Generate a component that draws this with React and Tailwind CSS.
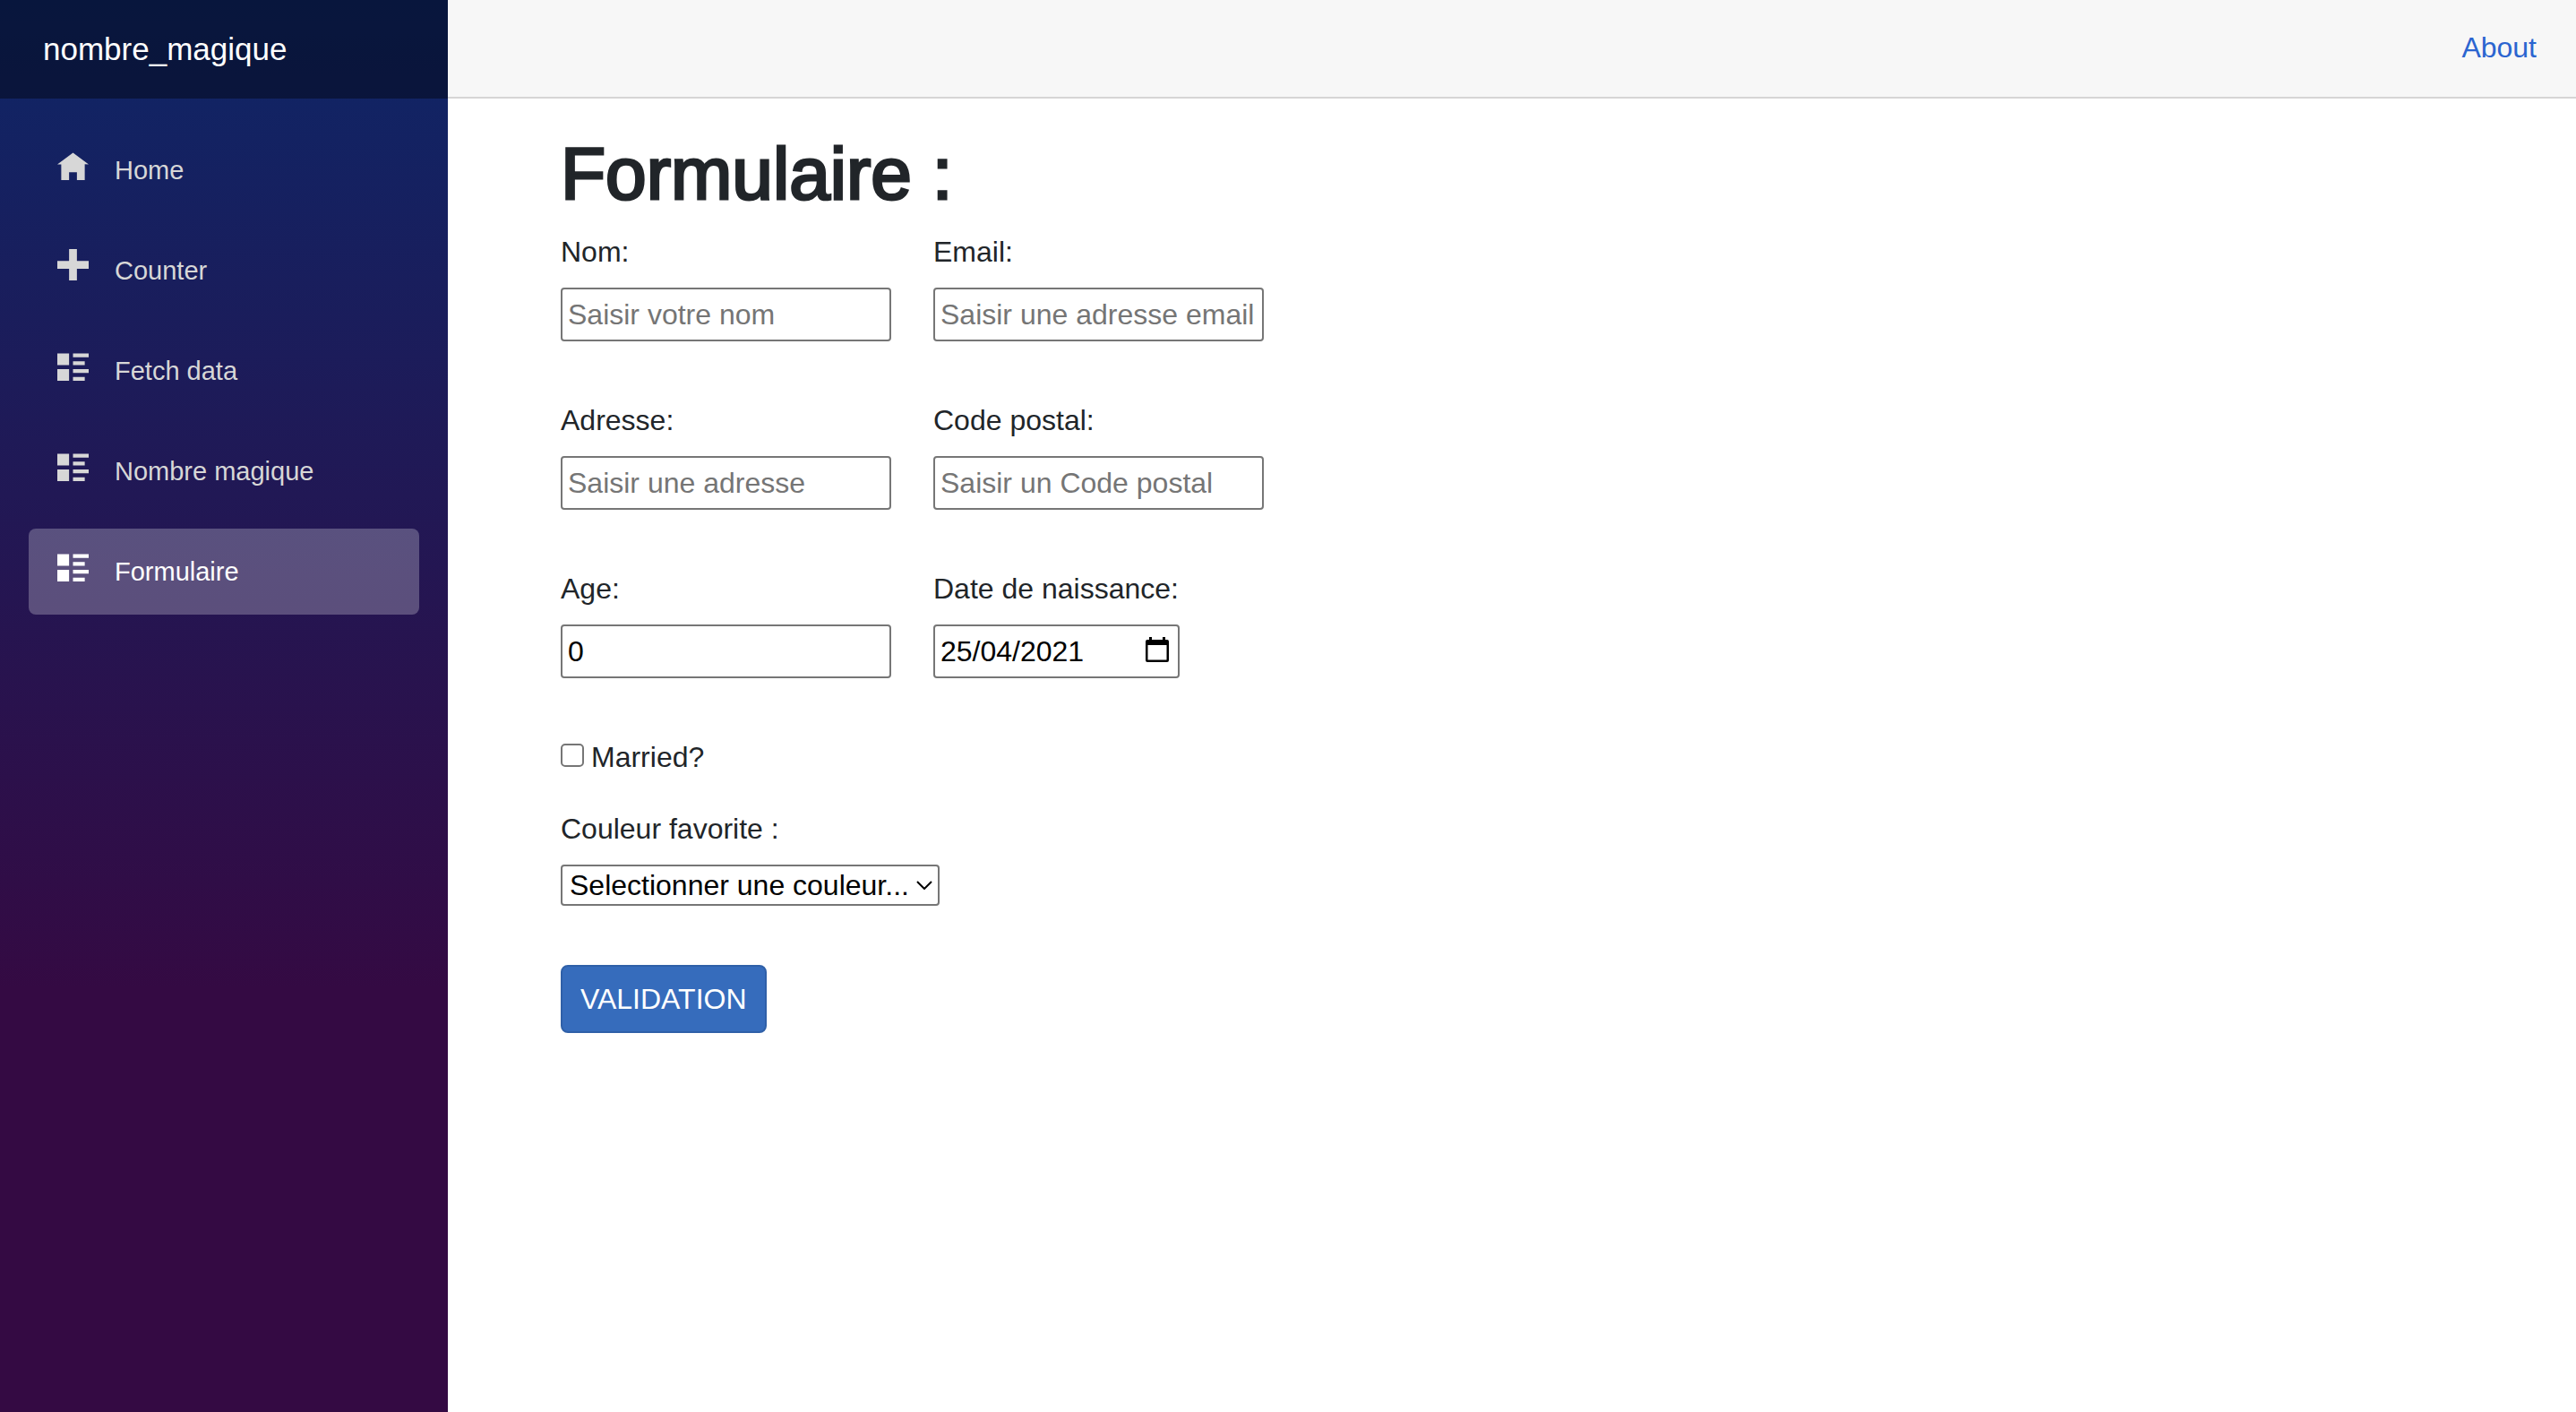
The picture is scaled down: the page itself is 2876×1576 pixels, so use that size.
import React from "react";

const icons = {
  home: { viewBox: "0 -1 8 8", d: "M4 0l-4 3h1v4h2v-2h2v2h2v-4.03l1 .03-4-3z" },
  plus: { viewBox: "0 0 8 8", d: "M3 0v3h-3v2h3v3h2v-3h3v-2h-3v-3h-2z" },
  list: {
    viewBox: "0 -1 8 8",
    d: "M0 0v3h3v-3h-3zm4 0v1h4v-1h-4zm0 2v1h3v-1h-3zm-4 2v3h3v-3h-3zm4 0v1h4v-1h-4zm0 2v1h3v-1h-3z",
  },
};

const links = [
  { label: "Home", icon: "home" },
  { label: "Counter", icon: "plus" },
  { label: "Fetch data", icon: "list" },
  { label: "Nombre magique", icon: "list" },
  { label: "Formulaire", icon: "list", active: true },
];

const control =
  "h-[60px] rounded-sm border-2 border-[#767676] bg-white px-1.5 text-[32px] text-black placeholder:text-[#757575]";

function NavItem({ label, icon, active }) {
  const { viewBox, d } = icons[icon];
  return (
    <li>
      <a
        href="#"
        aria-current={active ? "page" : undefined}
        className={
          "flex h-24 items-center rounded-lg px-8 text-[29px] " +
          (active ? "bg-white/25 text-white" : "text-[#d7d7d7]")
        }
      >
        <span className="h-12 w-16 shrink-0">
          <svg viewBox={viewBox} className="size-[35px] fill-current" aria-hidden="true">
            <path d={d} />
          </svg>
        </span>
        {label}
      </a>
    </li>
  );
}

function Field({ id, label, children }) {
  return (
    <div className="flex flex-col items-start gap-4">
      <label htmlFor={id}>{label}</label>
      {children}
    </div>
  );
}

function TextField({ id, label, ...props }) {
  return (
    <Field id={id} label={label}>
      <input id={id} className={control + " w-[369px]"} {...props} />
    </Field>
  );
}

function DateField({ id, label }) {
  return (
    <Field id={id} label={label}>
      <div className={control + " flex w-[275px] items-center justify-between"}>
        <input id={id} type="text" defaultValue="25/04/2021" className="w-48 min-w-0 outline-none" />
        <button type="button" aria-label="Ouvrir le calendrier" className="mr-1 pb-1">
          <svg viewBox="0 0 26 28" className="h-7 w-[26px]" aria-hidden="true">
            <path
              fillRule="evenodd"
              d="M4 0h3v3h12V0h3v3h2a2 2 0 0 1 2 2v21a2 2 0 0 1-2 2H2a2 2 0 0 1-2-2V5a2 2 0 0 1 2-2h2zM2.500 9v16.500h21V9z"
            />
          </svg>
        </button>
      </div>
    </Field>
  );
}

export default function App() {
  return (
    <div className="flex min-h-screen bg-white font-['Liberation_Sans',Arial,sans-serif] text-[32px] leading-[48px] text-[#212529]">
      <aside className="w-[500px] shrink-0 bg-[linear-gradient(180deg,#0e2667_0%,#340a43_70%)]">
        <div className="flex h-[110px] items-center bg-black/40 px-12">
          <a href="#" className="text-[35px] text-white">
            nombre_magique
          </a>
        </div>
        <nav>
          <ul className="flex flex-col gap-4 px-8 pt-8">
            {links.map((link) => (
              <NavItem key={link.label} {...link} />
            ))}
          </ul>
        </nav>
      </aside>

      <div className="min-w-0 flex-1">
        <header className="flex h-[110px] items-center justify-end border-b-2 border-[#d6d5d5] bg-[#f7f7f7] px-11 pb-0.5">
          <a href="#" className="text-[#2b65d0]">
            About
          </a>
        </header>

        <main className="px-[126px] pt-9">
          <h1 className="mb-4 text-[82px] leading-[95px] [-webkit-text-stroke:3px]">Formulaire :</h1>
          <form onSubmit={(event) => event.preventDefault()}>
            <div className="grid grid-cols-[max-content_max-content] gap-x-[47px] gap-y-16">
              <TextField id="nom" label="Nom:" type="text" placeholder="Saisir votre nom" />
              <TextField id="email" label="Email:" type="email" placeholder="Saisir une adresse email" />
              <TextField id="adresse" label="Adresse:" type="text" placeholder="Saisir une adresse" />
              <TextField id="code" label="Code postal:" type="text" placeholder="Saisir un Code postal" />
              <TextField id="age" label="Age:" type="text" inputMode="numeric" defaultValue="0" />
              <DateField id="naissance" label="Date de naissance:" />
            </div>

            <div className="mt-16 flex items-center gap-2">
              <input
                id="married"
                type="checkbox"
                className="mb-1 size-[26px] appearance-none rounded-[5px] border-2 border-[#767676] bg-white checked:bg-[#366cbc]"
              />
              <label htmlFor="married">Married?</label>
            </div>

            <div className="mt-8">
              <Field id="couleur" label="Couleur favorite :">
                <div className="relative">
                  <select
                    id="couleur"
                    className="block h-[46px] w-[423px] appearance-none rounded-sm border-2 border-[#767676] bg-white px-2 text-[32px] leading-[40px] text-black"
                  >
                    <option>Selectionner une couleur...</option>
                  </select>
                  <svg
                    viewBox="0 0 18 10"
                    className="pointer-events-none absolute top-[18px] right-2 h-2.5 w-[18px] fill-none stroke-black stroke-2"
                    aria-hidden="true"
                  >
                    <path d="M1 1l8 8 8-8" />
                  </svg>
                </div>
              </Field>
            </div>

            <button
              type="submit"
              className="mt-[66px] h-[76px] rounded-lg border-2 border-[#2f60a8] bg-[#366cbc] px-5 text-white"
            >
              VALIDATION
            </button>
          </form>
        </main>
      </div>
    </div>
  );
}
